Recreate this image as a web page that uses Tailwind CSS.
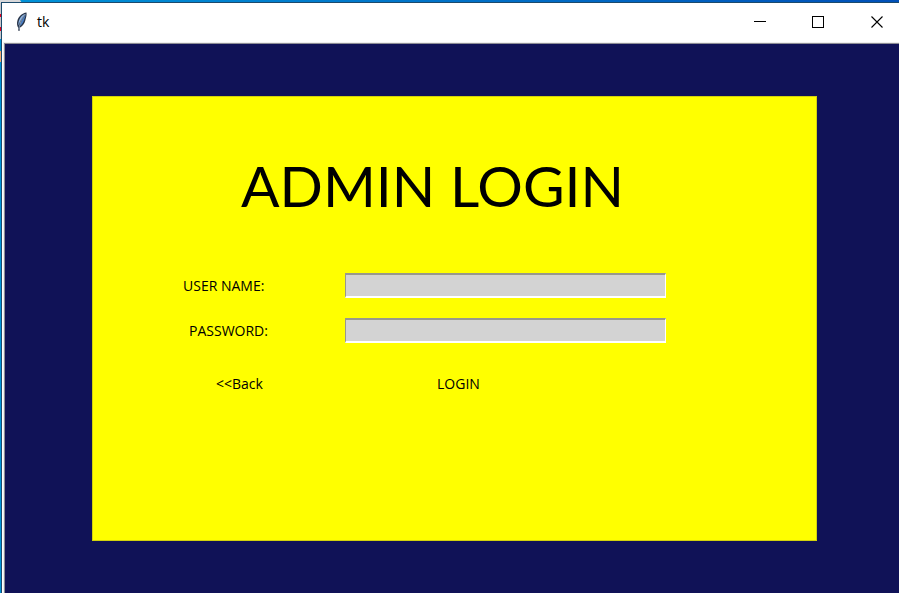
<!DOCTYPE html>
<html lang="en">
<head>
<meta charset="utf-8">
<meta name="viewport" content="width=device-width, initial-scale=1">
<title>tk</title>
<script src="https://cdn.jsdelivr.net/npm/@tailwindcss/browser@4"></script>
</head>
<body class="relative flex min-h-screen flex-col overflow-x-hidden bg-linear-to-r from-[#0093d8] to-[#0050b8] pt-[2px] pl-px font-['Open_Sans','Noto_Sans',sans-serif] text-black">
<!-- desktop behind the window -->
<svg class="absolute top-0 left-0" width="24" height="66" aria-hidden="true">
  <path d="M0 0h20l2 3H0z" fill="#d8d8da"/>
  <path d="M0 3h2v36H0z" fill="#c8c8cc"/>
  <path d="M0 14h2v3H0zM0 27h2v4H0z" fill="#e00020"/>
  <path d="M0 51h2v11H0z" fill="#f0a870"/>
</svg>
<div class="relative flex grow flex-col border-t border-l border-[#1c4a6c] bg-white">
  <header class="flex h-10 shrink-0 items-center pb-[2px] pl-[13px]">
    <svg class="shrink-0" width="14" height="22" viewBox="0 0 14 22" aria-hidden="true">
      <path d="M11.500 1.500C7 2 3.500 5.500 2.300 10c-.6 2.600-.2 4.800.8 6.500l.4 3.500 1-.1.3-3.200C8 15 9.500 12.500 10.300 9.500c.7-2.800 1.600-5.500 1.200-8z" fill="#283448"/>
      <path d="M10.300 2.800C6.800 4 4.600 7 3.700 10.500c-.4 1.500-.4 2.700-.2 4C5 10.500 7 6.500 10.300 2.800z" fill="#8cb4e4"/>
      <path d="M10.700 3.500C8 7 6 11 4.800 15c2.500-1.600 3.800-4 4.400-6.500.5-2 1.400-3.200 1.500-5z" fill="#4a80c8"/>
      <path d="M10.500 3C7.500 6.500 5 11 3.900 18" fill="none" stroke="#c2d8f0" stroke-width=".6"/>
    </svg>
    <h1 class="ml-2 grow text-sm leading-5">tk</h1>
    <div class="-mr-2 flex h-full shrink-0">
      <button class="flex w-[58px] items-center justify-center" aria-label="Minimize"><svg width="12" height="12" shape-rendering="crispEdges"><path d="M0 5h12v1H0z"/></svg></button>
      <button class="flex w-[58px] items-center justify-center" aria-label="Maximize"><svg width="12" height="12" shape-rendering="crispEdges"><path d="M.5.5h11v11H.5z" fill="none" stroke="#000"/></svg></button>
      <button class="flex w-[60px] items-center justify-center" aria-label="Close"><svg width="12" height="12"><path d="M.5.5l11 11M11.500.5l-11 11" fill="none" stroke="#000" stroke-width="1.100"/></svg></button>
    </div>
  </header>
  <main class="ml-[2px] flex grow flex-col border-t border-l border-[#8c8c94] bg-[#101257] pt-[52px] pr-[82px] pb-[52px] pl-[87px] outline-1 outline-[#eeeeee]">
    <form class="grow bg-[#ffff00] pt-[49px] pb-[136px] text-sm leading-5 outline-1 -outline-offset-1 outline-[#d2d20c]" onsubmit="return false">
      <h2 class="pl-[149px] font-['Lato',sans-serif] text-[57px] leading-20 whitespace-nowrap">ADMIN LOGIN</h2>
      <div class="mt-12 flex h-[25px] items-center">
        <label for="user" class="w-[253px] shrink-0 pl-[91px]">USER NAME:</label>
        <input id="user" type="text" class="h-[25px] w-[321px] border border-t-2 border-b-2 border-t-[#98988c] border-r-white border-b-white border-l-[#98988c] bg-[#d3d3d3] px-1">
      </div>
      <div class="mt-5 flex h-[25px] items-center">
        <label for="pass" class="w-[253px] shrink-0 pl-[97px]">PASSWORD:</label>
        <input id="pass" type="password" class="h-[25px] w-[321px] border border-t-2 border-b-2 border-t-[#98988c] border-r-white border-b-white border-l-[#98988c] bg-[#d3d3d3] px-1">
      </div>
      <div class="mt-[31px] flex">
        <div class="w-[345px] shrink-0 pl-[124px]"><button type="button">&lt;&lt;Back</button></div>
        <button type="submit">LOGIN</button>
      </div>
    </form>
  </main>
</div>
</body>
</html>
